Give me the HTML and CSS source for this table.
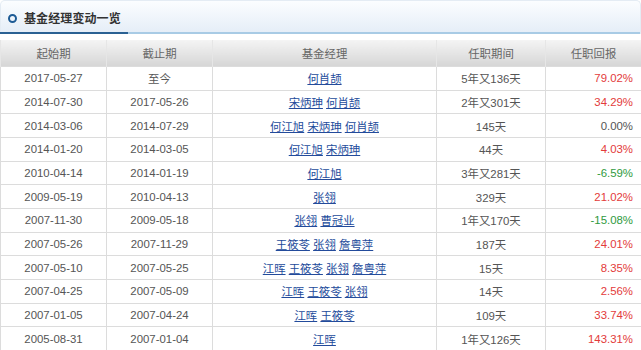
FILE: index.html
```html
<!DOCTYPE html>
<html lang="zh">
<head>
<meta charset="utf-8">
<link rel="stylesheet" href="styles.css">
</head>
<body>
<div class="panel">
  <div class="title-bar">
    <span class="dot"></span>
    <h2 class="title">基金经理变动一览</h2>
  </div>
  <table class="mgr">
    <colgroup>
      <col class="c1"><col class="c2"><col class="c3"><col class="c4"><col class="c5">
    </colgroup>
    <thead>
      <tr><th>起始期</th><th>截止期</th><th>基金经理</th><th>任职期间</th><th>任职回报</th></tr>
    </thead>
    <tbody>
      <tr><td>2017-05-27</td><td>至今</td><td><a href="#">何肖颉</a></td><td>5年又136天</td><td class="up">79.02%</td></tr>
      <tr><td>2014-07-30</td><td>2017-05-26</td><td><a href="#">宋炳珅</a> <a href="#">何肖颉</a></td><td>2年又301天</td><td class="up">34.29%</td></tr>
      <tr><td>2014-03-06</td><td>2014-07-29</td><td><a href="#">何江旭</a> <a href="#">宋炳珅</a> <a href="#">何肖颉</a></td><td>145天</td><td class="flat">0.00%</td></tr>
      <tr><td>2014-01-20</td><td>2014-03-05</td><td><a href="#">何江旭</a> <a href="#">宋炳珅</a></td><td>44天</td><td class="up">4.03%</td></tr>
      <tr><td>2010-04-14</td><td>2014-01-19</td><td><a href="#">何江旭</a></td><td>3年又281天</td><td class="down">-6.59%</td></tr>
      <tr><td>2009-05-19</td><td>2010-04-13</td><td><a href="#">张翎</a></td><td>329天</td><td class="up">21.02%</td></tr>
      <tr><td>2007-11-30</td><td>2009-05-18</td><td><a href="#">张翎</a> <a href="#">曹冠业</a></td><td>1年又170天</td><td class="down">-15.08%</td></tr>
      <tr><td>2007-05-26</td><td>2007-11-29</td><td><a href="#">王筱苓</a> <a href="#">张翎</a> <a href="#">詹粤萍</a></td><td>187天</td><td class="up">24.01%</td></tr>
      <tr><td>2007-05-10</td><td>2007-05-25</td><td><a href="#">江晖</a> <a href="#">王筱苓</a> <a href="#">张翎</a> <a href="#">詹粤萍</a></td><td>15天</td><td class="up">8.35%</td></tr>
      <tr><td>2007-04-25</td><td>2007-05-09</td><td><a href="#">江晖</a> <a href="#">王筱苓</a> <a href="#">张翎</a></td><td>14天</td><td class="up">2.56%</td></tr>
      <tr><td>2007-01-05</td><td>2007-04-24</td><td><a href="#">江晖</a> <a href="#">王筱苓</a></td><td>109天</td><td class="up">33.74%</td></tr>
      <tr><td>2005-08-31</td><td>2007-01-04</td><td><a href="#">江晖</a></td><td>1年又126天</td><td class="up">143.31%</td></tr>
    </tbody>
  </table>
</div>
</body>
</html>
```
FILE: styles.css
```css
html, body {
  margin: 0;
  padding: 0;
  background: #ffffff;
}
body {
  font-family: "Liberation Sans", Arial, "Noto Sans CJK SC", sans-serif;
  font-size: 11.4px;
  color: #555555;
  width: 641px;
  overflow: hidden;
}
.panel {
  width: 641px;
}
.title-bar {
  box-sizing: border-box;
  height: 34px;
  display: flex;
  align-items: center;
  padding-left: 7px;
  border: 1px solid #e4ecf4;
  border-bottom: none;
  border-radius: 5px 5px 0 0;
  background: linear-gradient(#fbfdff, #e4edf7);
  position: relative;
  box-shadow: inset 0 -2px 0 #a8cbe5;
}
.title-bar::after {
  content: "";
  position: absolute;
  left: -1px;
  bottom: 0;
  width: 128px;
  height: 2px;
  background: #2a6193;
}
.dot {
  box-sizing: border-box;
  width: 9px;
  height: 9px;
  border: 2px solid #1d5b95;
  border-radius: 50%;
  margin-right: 7px;
  margin-top: 1px;
}
.title {
  margin: 0;
  font-family: "Noto Sans CJK SC", sans-serif;
  font-size: 12px;
  font-weight: bold;
  color: #333333;
  letter-spacing: 0.1px;
}
.mgr {
  margin-top: 6px;
  width: 641px;
  border-collapse: collapse;
  table-layout: fixed;
}
.c1 { width: 106px; }
.c2 { width: 106px; }
.c3 { width: 224px; }
.c4 { width: 109px; }
.c5 { width: 96px; }
.mgr th {
  height: 26px;
  padding: 0;
  font-weight: normal;
  font-family: "Noto Sans CJK SC", sans-serif;
  font-size: 11.4px;
  color: #666666;
  background: linear-gradient(#f4f4f4, #d6d6d6);
  border: 1px solid #e6e6e6;
  border-top: none;
  border-bottom: none;
  text-align: center;
}
.mgr td {
  box-sizing: border-box;
  height: 23.67px;
  padding: 0;
  border: 1px solid #dcdcdc;
  text-align: center;
  white-space: nowrap;
  color: #555555;
}
.mgr td:last-child {
  text-align: right;
  padding-right: 8px;
}
.mgr a {
  color: #234b9b;
  text-decoration: underline;
}
.up { color: #e33b3b !important; }
.down { color: #2f9a3e !important; }
.flat { color: #555555; }
```
